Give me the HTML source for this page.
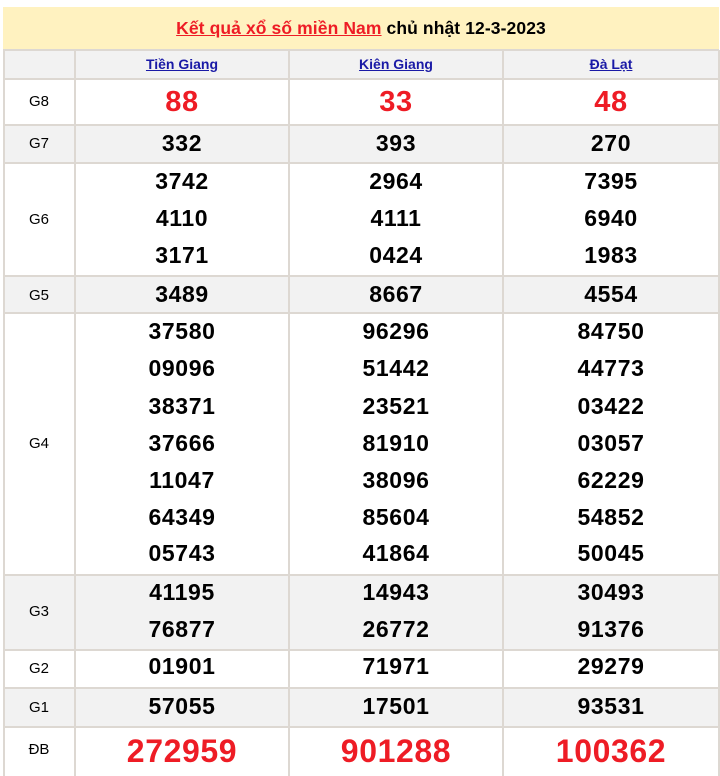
<!DOCTYPE html>
<html><head><meta charset="utf-8"><style>
body{margin:0;width:720px;height:776px;background:#fff;position:relative;overflow:hidden;font-family:"Liberation Sans",Arial,sans-serif}
.a{position:absolute}
.hl{position:absolute;left:3px;width:716px;height:2px;background:#ddd8d2}
.vl{position:absolute;top:50px;height:726px;width:2px;background:#ddd8d2}
.bg{position:absolute;left:3px;width:716px;background:#f2f2f2}
.c{position:absolute;text-align:center;font-weight:bold;color:#000;letter-spacing:0.6px}
.l{position:absolute;left:4px;width:70px;text-align:center;font-size:15px;color:#000}
.r{color:#ee1c25}
.h{position:absolute;top:56px;text-align:center;font-size:14px;font-weight:bold;color:#1a1aa6;text-decoration:underline}
</style></head><body>
<div class="a" style="left:3px;top:7px;width:716px;height:43px;background:#fff2c0"></div>
<div class="a" style="left:3px;top:16px;width:716px;text-align:center;font-size:17.5px;font-weight:bold;line-height:24px;letter-spacing:0.1px"><span style="color:#ee1c25;text-decoration:underline">Kết quả xổ số miền Nam</span> chủ nhật 12-3-2023</div>
<div class="bg" style="top:50px;height:29px"></div>
<div class="bg" style="top:125px;height:38px"></div>
<div class="bg" style="top:276px;height:38px"></div>
<div class="bg" style="top:575px;height:75px"></div>
<div class="bg" style="top:688px;height:39px"></div>
<div class="hl" style="top:49px"></div><div class="hl" style="top:78px"></div><div class="hl" style="top:124px"></div><div class="hl" style="top:162px"></div><div class="hl" style="top:275px"></div><div class="hl" style="top:312px"></div><div class="hl" style="top:574px"></div><div class="hl" style="top:649px"></div><div class="hl" style="top:687px"></div><div class="hl" style="top:726px"></div>
<div class="vl" style="left:3px"></div><div class="vl" style="left:74px"></div><div class="vl" style="left:288px"></div><div class="vl" style="left:502px"></div><div class="vl" style="left:718px"></div>
<div class="h" style="left:76px;width:212px">Tiền Giang</div>
<div class="h" style="left:290px;width:212px">Kiên Giang</div>
<div class="h" style="left:504px;width:214px">Đà Lạt</div>
<div class="l" style="top:93px">G8</div>
<div class="l" style="top:135px">G7</div>
<div class="l" style="top:211px">G6</div>
<div class="l" style="top:287px">G5</div>
<div class="l" style="top:435px">G4</div>
<div class="l" style="top:603px">G3</div>
<div class="l" style="top:660px">G2</div>
<div class="l" style="top:699px">G1</div>
<div class="l" style="top:741px">ĐB</div>
<div id="g"></div>
<script>
var cols=[[76,212],[290,212],[504,214]];
var rows=[
[102,29,true,["88","33","48"]],
[144,23,false,["332","393","270"]],
[182,23,false,["3742","2964","7395"]],
[219,23,false,["4110","4111","6940"]],
[256,23,false,["3171","0424","1983"]],
[295,23,false,["3489","8667","4554"]],
[332,23,false,["37580","96296","84750"]],
[369,23,false,["09096","51442","44773"]],
[407,23,false,["38371","23521","03422"]],
[444,23,false,["37666","81910","03057"]],
[481,23,false,["11047","38096","62229"]],
[518,23,false,["64349","85604","54852"]],
[554,23,false,["05743","41864","50045"]],
[593,23,false,["41195","14943","30493"]],
[630,23,false,["76877","26772","91376"]],
[667,23,false,["01901","71971","29279"]],
[707,23,false,["57055","17501","93531"]],
[751,32,true,["272959","901288","100362"]]];
var h="";
rows.forEach(function(r){for(var i=0;i<3;i++){h+='<div class="c'+(r[2]?' r':'')+'" style="left:'+cols[i][0]+'px;width:'+cols[i][1]+'px;top:'+(r[0]-r[1]*0.6)+'px;font-size:'+r[1]+'px;line-height:'+(r[1]*1.2)+'px">'+r[3][i]+'</div>';}});
document.getElementById("g").innerHTML=h;
</script>
</body></html>
